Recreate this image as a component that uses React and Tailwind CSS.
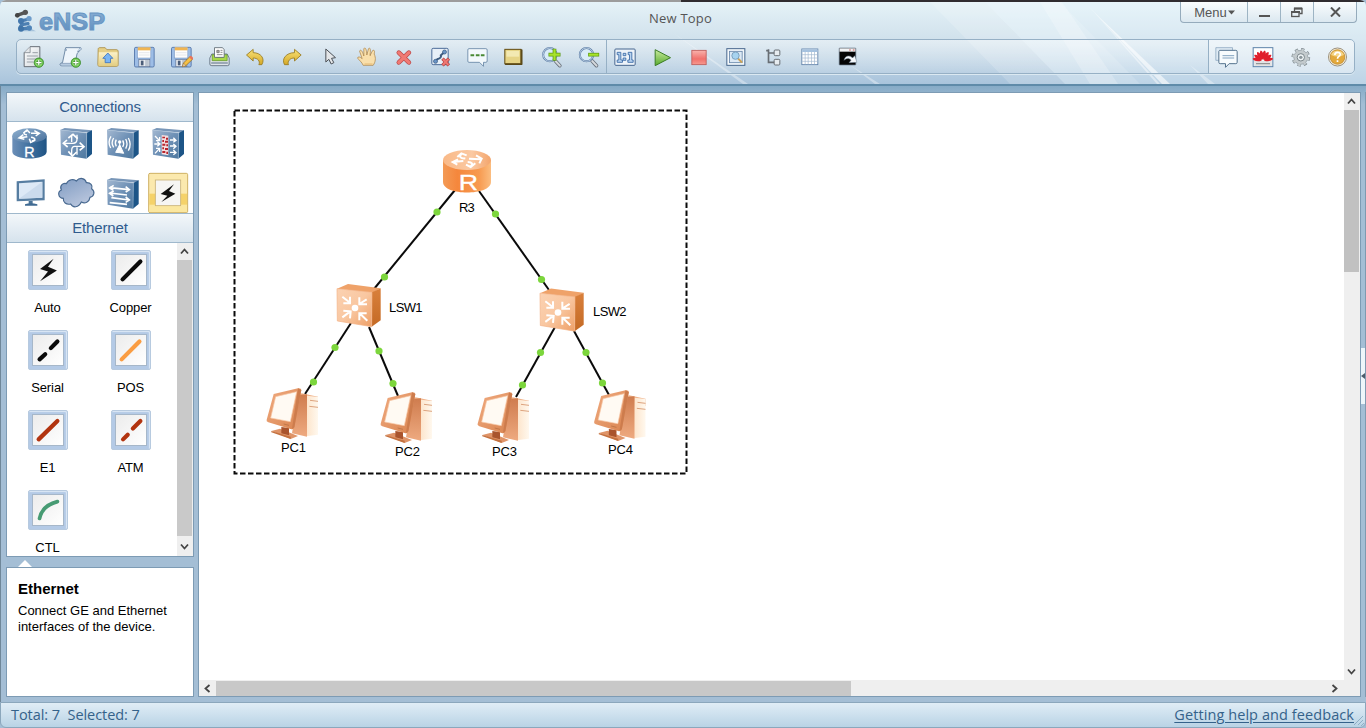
import React from "react";

function Defs() {
  return (
    <svg className="absolute h-0 w-0" aria-hidden="true">
      <defs>
        <linearGradient id="blueTop" x1="0" y1="0" x2="1" y2="1">
          <stop offset="0" stopColor="#8fb0cf" />
          <stop offset="1" stopColor="#476f9b" />
        </linearGradient>
        <linearGradient id="blueSide" x1="0" y1="0" x2="1" y2="0">
          <stop offset="0" stopColor="#6c8fb8" />
          <stop offset="0.5" stopColor="#41719f" />
          <stop offset="1" stopColor="#1f5484" />
        </linearGradient>
        <linearGradient id="blueFace" x1="0" y1="0" x2="1" y2="1">
          <stop offset="0" stopColor="#a3b8d1" />
          <stop offset="0.5" stopColor="#6f91b6" />
          <stop offset="1" stopColor="#4d789f" />
        </linearGradient>
        <linearGradient id="cloud" x1="0" y1="0" x2="0.6" y2="1">
          <stop offset="0" stopColor="#7f9bc2" />
          <stop offset="1" stopColor="#b9c6dd" />
        </linearGradient>
        <linearGradient id="orTop" x1="0" y1="0" x2="1" y2="0">
          <stop offset="0" stopColor="#f9b987" />
          <stop offset="0.6" stopColor="#fbc9a2" />
          <stop offset="1" stopColor="#f3a56c" />
        </linearGradient>
        <linearGradient id="orSide" x1="0" y1="0" x2="1" y2="0">
          <stop offset="0" stopColor="#f39a55" />
          <stop offset="0.3" stopColor="#f5873c" />
          <stop offset="0.75" stopColor="#f79a50" />
          <stop offset="1" stopColor="#fbbd80" />
        </linearGradient>
        <linearGradient id="swFace" x1="0" y1="0" x2="1" y2="1">
          <stop offset="0" stopColor="#fbd2b2" />
          <stop offset="0.5" stopColor="#f9c7a1" />
          <stop offset="1" stopColor="#ee9f66" />
        </linearGradient>
        <linearGradient id="swSide" x1="0" y1="0" x2="0" y2="1">
          <stop offset="0" stopColor="#d9803c" />
          <stop offset="1" stopColor="#c46a25" />
        </linearGradient>
        <linearGradient id="pcFrame" x1="0" y1="0" x2="1" y2="1">
          <stop offset="0" stopColor="#f0ab80" />
          <stop offset="1" stopColor="#d98450" />
        </linearGradient>
        <linearGradient id="pcSide" x1="0" y1="0" x2="0" y2="1">
          <stop offset="0" stopColor="#cf7c4e" />
          <stop offset="1" stopColor="#eeaa80" />
        </linearGradient>
        <linearGradient id="pcFront" x1="0" y1="0" x2="1" y2="0">
          <stop offset="0" stopColor="#fde3c8" />
          <stop offset="1" stopColor="#fff8ee" />
        </linearGradient>
        <linearGradient id="gold" x1="0" y1="0" x2="0" y2="1">
          <stop offset="0" stopColor="#f8e277" />
          <stop offset="1" stopColor="#d5a827" />
        </linearGradient>
        <linearGradient id="folder" x1="0" y1="0" x2="0" y2="1">
          <stop offset="0" stopColor="#fbf1c9" />
          <stop offset="1" stopColor="#e3cd80" />
        </linearGradient>
        <linearGradient id="play" x1="0" y1="0" x2="0" y2="1">
          <stop offset="0" stopColor="#c8ea9e" />
          <stop offset="1" stopColor="#58ab2e" />
        </linearGradient>
        <linearGradient id="stop" x1="0" y1="0" x2="0" y2="1">
          <stop offset="0" stopColor="#f9b3ad" />
          <stop offset="0.6" stopColor="#f0716c" />
          <stop offset="1" stopColor="#f79a90" />
        </linearGradient>
        <linearGradient id="paper" x1="0" y1="0" x2="1" y2="1">
          <stop offset="0" stopColor="#ffffff" />
          <stop offset="1" stopColor="#d3d8dd" />
        </linearGradient>
        <linearGradient id="logoText" x1="0" y1="0" x2="0" y2="1">
          <stop offset="0" stopColor="#8db2d6" />
          <stop offset="1" stopColor="#5b8cbd" />
        </linearGradient>
      </defs>
    </svg>
  );
}

function Plus({ x, y }) {
  return (
    <g>
      <circle cx={x} cy={y} r="14" fill="#5fbb45" stroke="#3a8a2b" strokeWidth="2.5" />
      <circle cx={x} cy={y} r="11" fill="#8bd76c" />
      <path d={`M${x - 8} ${y}h16M${x} ${y - 8}v16`} stroke="#2d7a22" strokeWidth="7" />
      <path d={`M${x - 8} ${y}h16M${x} ${y - 8}v16`} stroke="#fff" strokeWidth="4" />
    </g>
  );
}

function Floppy({ x }) {
  return (
    <g transform={`translate(${x} 0)`}>
      <rect x="2" y="142" width="59" height="59" rx="4" fill="#9dbde6" stroke="#4c6fa3" strokeWidth="2.5" />
      <rect x="11" y="142" width="40" height="32" fill="#fdfdfd" stroke="#6d8cb8" strokeWidth="1.5" />
      <rect x="12" y="142" width="38" height="9" fill="#f0b552" />
      <path d="M15 158h32M15 165h32" stroke="#dcdfe4" strokeWidth="2" />
      <rect x="15" y="178" width="33" height="22" fill="#e8ebef" stroke="#5a6f90" strokeWidth="2" />
      <rect x="21" y="182" width="8" height="14" fill="#4a5c78" />
      <rect x="34" y="180" width="11" height="18" fill="#bcc5d0" />
    </g>
  );
}

function Lens({ x, plus }) {
  return (
    <g transform={`translate(${x} 0)`}>
      <path d="M41 183L54 197" stroke="#68717c" strokeWidth="11" strokeLinecap="round" />
      <path d="M41 183L54 197" stroke="#d5d9dd" strokeWidth="6" strokeLinecap="round" />
      <circle cx="24" cy="164" r="20" fill="#d9ecf8" stroke="#5e7ea6" strokeWidth="6" />
      <circle cx="24" cy="164" r="20" fill="none" stroke="#c6d8ea" strokeWidth="2.5" />
      <path d={plus ? "M20 164h36M38 146v36" : "M29 164h33"} stroke="#5c9a12" strokeWidth="11" />
      <path d={plus ? "M22 164h32M38 148v32" : "M31 164h29"} stroke="#a8e32a" strokeWidth="6.5" />
    </g>
  );
}

const mainIcons = [
  <g>
    <path d="M89 140H118V200H71V158Z" fill="url(#paper)" stroke="#4f565e" strokeWidth="2.5" strokeLinejoin="round" />
    <path d="M89 140V158H71" fill="#e4e7ea" stroke="#6b737b" strokeWidth="2" />
    <path d="M96 158h16M79 168h33M79 177h28M79 186h20" stroke="#9aa1a8" strokeWidth="3" />
    <Plus x={115} y={188} />
  </g>,
  <g>
    <path d="M196 143H240C234 146 237 158 230 160L222 196H182C176 196 180 188 186 188L194 150Z" fill="#eef5fb" stroke="#5c7898" strokeWidth="2.5" strokeLinejoin="round" />
    <path d="M196 143C190 152 200 154 198 148M240 143C246 147 238 155 230 154" fill="#cfe0f0" stroke="#5c7898" strokeWidth="2" />
    <path d="M180 190H216V198H184C178 198 178 192 180 190Z" fill="#b7cbe0" stroke="#5c7898" strokeWidth="1.5" />
    <Plus x={226} y={188} />
  </g>,
  <g>
    <path d="M293 148C293 144 295 143 298 143H314L319 149H347C351 149 353 151 353 154V194C353 198 351 199 347 199H297C293 199 292 197 292 193Z" fill="#e6d087" stroke="#a98d44" strokeWidth="2.5" />
    <path d="M295 157H351V194C351 197 350 198 347 198H298C295 198 294 197 294 194Z" fill="url(#folder)" />
    <path d="M322 159L337 175H330V188H314V175H307Z" fill="#79b5f4" stroke="#3d73bd" strokeWidth="2.5" strokeLinejoin="round" />
  </g>,
  <Floppy x={400} />,
  <g>
    <Floppy x={511} />
    <path d="M549 189L569 169L577 177L556 197L546 200Z" fill="#f6c146" stroke="#8c6420" strokeWidth="2" />
    <path d="M566 172L570 167Q576 168 578 175L574 180Z" fill="#e9745a" />
    <path d="M549 189L556 197L546 200Z" fill="#f3dcc1" stroke="#8c6420" strokeWidth="1.5" />
  </g>,
  <g>
    <path d="M634 162H680L686 174V192Q686 197 681 197H634Q628 197 628 192V174Z" fill="#dfe4e9" stroke="#59697a" strokeWidth="2.5" />
    <path d="M632 189H682" stroke="#8494a5" strokeWidth="4" />
    <path d="M635 164H648V172H668V164H680V182H635Z" fill="#a9d84a" stroke="#558d20" strokeWidth="2" />
    <path d="M642 143H666L671 149V172H642Z" fill="#fff" stroke="#5d6770" strokeWidth="2.5" />
    <path d="M649 151h7v7h-7zM660 151h6M660 157h6M649 164h17" stroke="#777" strokeWidth="2.5" fill="#aaa" />
  </g>,
  <path d="M738 165L758 148V158C780 158 795 175 784 194H775C780 184 772 174 758 174V183Z" fill="url(#gold)" stroke="#96781f" strokeWidth="2.5" strokeLinejoin="round" />,
  <path d="M902 165L882 148V158C858 158 842 176 852 194H864C860 184 868 174 882 174V183Z" fill="url(#gold)" stroke="#96781f" strokeWidth="2.5" strokeLinejoin="round" />,
  <path transform="translate(930 0)" d="M46 147V186L55 178L62 192L70 188L63 175L75 173Z" fill="#e4e6e8" stroke="#4c5157" strokeWidth="3" strokeLinejoin="round" />,
  <g transform="translate(930 0)">
    <path d="M158 196C154 186 146 181 141 174C142 169 149 170 155 176L147 153C150 148 155 150 160 168L160 146C163 142 168 143 169 165L174 146C178 142 182 145 178 168L186 152C191 149 194 152 191 162C197 174 195 186 188 196Z" fill="#f9dfab" stroke="#a87b3d" strokeWidth="2" strokeLinejoin="round" />
    <path d="M158 168V176H178V166" fill="#f9dfab" />
    <path d="M162 192h24" stroke="#e5b872" strokeWidth="3" />
  </g>,
  <g transform="translate(930 0)">
    <path d="M265 158L295 187M295 158L265 187" stroke="#bb4a4a" strokeWidth="14" strokeLinecap="round" />
    <path d="M265 158L295 187M295 158L265 187" stroke="#f07973" strokeWidth="10" strokeLinecap="round" />
  </g>,
  <g transform="translate(930 0)">
    <rect x="364" y="145" width="49" height="49" rx="4" fill="#e8f0f8" stroke="#4b6b98" strokeWidth="3" />
    <path d="M374 184L380 178Q394 174 391 166L403 155" fill="none" stroke="#3e5c80" strokeWidth="6" />
    <circle cx="402" cy="156" r="6" fill="#6a94c5" stroke="#34547b" strokeWidth="2" />
    <circle cx="375" cy="184" r="6" fill="#6a94c5" stroke="#34547b" strokeWidth="2" />
    <path d="M396 176L415 196M415 176L396 196" stroke="#b53c3c" strokeWidth="10" />
    <path d="M397 177L414 195M414 177L397 195" stroke="#ee7772" strokeWidth="6" />
  </g>,
  <g transform="translate(930 0)">
    <path d="M475 146H526Q530 146 530 150V183Q530 187 526 187H519V199L507 187H475Q472 187 472 183V150Q472 146 475 146Z" fill="#f3f9fc" stroke="#6584a3" strokeWidth="2.5" />
    <path d="M480 166h11M496 166h11M511 166h11" stroke="#4a8a35" strokeWidth="6" />
  </g>,
  <g transform="translate(930 0)">
    <rect x="583" y="148" width="53" height="47" rx="2" fill="#574718" />
    <rect x="583" y="148" width="48" height="43" fill="#e6d486" stroke="#665118" strokeWidth="3" />
    <rect x="588" y="153" width="38" height="17" fill="#f3e9b2" />
  </g>,
  <g transform="translate(930 0)"><Lens x={694} plus /></g>,
  <g transform="translate(930 0)"><Lens x={804} /></g>,
  <g transform="translate(1860 0)">
    <rect x="-17" y="147" width="61" height="49" rx="3" fill="#edf3f9" stroke="#46668f" strokeWidth="3" />
    <path d="M-10 157H1V180H6V187H-10V180H-5V164H-10ZM23 157H34V180H38V187H22V180H27V164H23ZM8 160h8v7h-8zM8 174h8v7h-8z" fill="#b7d2ef" stroke="#3566a4" strokeWidth="2.5" />
  </g>,
  <g transform="translate(1860 0)">
    <path d="M104 149L150 173L104 197Z" fill="url(#play)" stroke="#3b7d26" strokeWidth="3" strokeLinejoin="round" />
  </g>,
  <g transform="translate(1860 0)">
    <rect x="214" y="151" width="43" height="43" fill="url(#stop)" stroke="#bd5957" strokeWidth="2.5" />
  </g>,
  <g transform="translate(1860 0)">
    <rect x="319" y="146" width="54" height="50" fill="#f5f9fc" stroke="#47668c" strokeWidth="3" />
    <rect x="327" y="154" width="38" height="34" fill="#dce9f5" stroke="#6584a8" strokeWidth="2.5" />
    <path d="M353 176L363 186" stroke="#cda356" strokeWidth="6" strokeLinecap="round" />
    <circle cx="345" cy="167" r="11" fill="#a7d3ef" stroke="#7da3c0" strokeWidth="3" />
  </g>,
  <g transform="translate(1860 0)" fill="none" stroke="#686e74">
    <path d="M444 148V187H461M444 159H461M437 152H444" strokeWidth="5" />
    <rect x="461" y="150" width="17" height="17" rx="3" fill="#e7ecf0" strokeWidth="3" />
    <rect x="461" y="178" width="17" height="17" rx="3" fill="#e7ecf0" strokeWidth="3" />
  </g>,
  <g transform="translate(1860 0)">
    <rect x="544" y="147" width="48" height="47" fill="#fff" stroke="#5a7da6" strokeWidth="2.5" />
    <rect x="545" y="148" width="46" height="8" fill="#a6c2df" />
    <path d="M545 164H591M545 174H591M545 184H591M554 156V193M563 156V193M573 156V193M582 156V193" stroke="#a0b6ce" strokeWidth="2" />
  </g>,
  <g transform="translate(1860 0)">
    <rect x="656" y="144" width="50" height="51" rx="2" fill="#050505" stroke="#6e8093" strokeWidth="2" />
    <rect x="657" y="145" width="48" height="10" fill="#f2f4f6" />
    <path d="M686 150h5M697 150h5" stroke="#c85757" strokeWidth="3" />
    <path d="M671 181C672 166 690 164 696 174L703 167L709 187L686 188L692 180C685 173 677 174 671 181Z" fill="#f5f8fb" stroke="#738499" strokeWidth="1.5" />
  </g>,
];

const rightIcons = [
  <g>
    <path d="M466 143H516V181H466Z" fill="#dfebf4" stroke="#7d9cb6" strokeWidth="2" />
    <path d="M477 151H526Q530 151 530 155V187Q530 191 526 191H506L495 202V191H479Q475 191 475 187V154Z" fill="#f7fbfd" stroke="#55738e" strokeWidth="3" strokeLinejoin="round" />
    <path d="M486 167h35M486 174h35" stroke="#6c91b3" strokeWidth="2.5" />
  </g>,
  <g>
    <rect x="578" y="143" width="59" height="57" fill="#fff" stroke="#5d83aa" strokeWidth="3" />
    <rect x="581" y="182" width="53" height="16" fill="#e2e3e5" />
    <path d="M587 191h42" stroke="#858585" strokeWidth="4" strokeDasharray="5 1" />
    <g fill="#e01f2c">
      {[-80, -56, -33, -11, 11, 33, 56, 80].map((a) => (
        <path key={a} transform={`rotate(${a} 607 182)`} d="M607 179C599 166 602 154 607 151C612 154 615 166 607 179Z" />
      ))}
    </g>
  </g>,
  <g>
    <circle cx="721" cy="172" r="22" fill="none" stroke="#7e898f" strokeWidth="12" strokeDasharray="9 8.3" />
    <circle cx="721" cy="172" r="21" fill="#c3cacd" stroke="#8b969b" strokeWidth="2" />
    <circle cx="721" cy="172" r="22" fill="none" stroke="#c3cacd" strokeWidth="8" strokeDasharray="7 10.3" strokeDashoffset="-1" />
    <circle cx="721" cy="172" r="11" fill="#edf2f4" stroke="#7b868b" strokeWidth="3" />
    <circle cx="721" cy="172" r="5" fill="#8a959b" />
  </g>,
  <g>
    <circle cx="831" cy="171" r="27" fill="#f7f3e5" stroke="#897c64" strokeWidth="2.5" />
    <circle cx="831" cy="171" r="22" fill="#e3a93c" stroke="#b77d20" strokeWidth="2" />
    <path d="M812 165C815 148 847 148 850 165Q831 174 812 165Z" fill="#f5d588" />
    <path d="M823 165C823 154 840 155 839 164C838 170 831 169 831 176M831 181v5" fill="none" stroke="#fff" strokeWidth="5" />
  </g>,
];

function Cube({ x, y, children }) {
  return (
    <g transform={`translate(${x} ${y})`}>
      <path d="M0 6L13 0L95 7L91 14Z" fill="#7896b8" />
      <path d="M79 15L95 7V78L78 92Z" fill="#1d5587" />
      <path d="M0 6L79 15L78 92L2 80Z" fill="url(#blueFace)" />
      <path d="M0 6L79 15L78 92" fill="none" stroke="#a5bdd5" strokeWidth="1.5" />
      {children}
    </g>
  );
}

function Router({ x, y }) {
  return (
    <g transform={`translate(${x} ${y})`}>
      <path d="M0 22V70C0 97 103 97 103 70V22Z" fill="url(#blueSide)" />
      <ellipse cx="51.500" cy="22" rx="51.500" ry="22" fill="url(#blueTop)" />
      <RouterArrows />
      <text x="51" y="85" textAnchor="middle" className="font-['Liberation_Sans']" fontSize="43" fill="#fff" stroke="#fff">R</text>
    </g>
  );
}

function RouterArrows() {
  return (
    <g stroke="#fff" strokeWidth="4.500" fill="none">
      <path d="M44 20C30 18 34 10 44 8M33 14L44 5L53 14M56 15L78 15M66 7L81 15L70 23" />
      <path d="M22 28L45 25M33 19L20 29L36 33M56 27C70 29 72 36 58 38M69 35L55 42L51 31" />
    </g>
  );
}

const deviceIcons = [
  <Router x={37} y={121} />,
  <Cube x={181} y={120}>
    <g stroke="#fff" strokeWidth="5" fill="none">
      <path d="M10 46H38Q50 46 50 34V20M68 55H43Q34 55 34 68V82M34 20V42M50 80V58" strokeWidth="4" />
      <path d="M20 36L9 46L22 57M58 44L71 56L58 67M24 30L38 19L52 32M24 70L36 84L49 72" />
    </g>
  </Cube>,
  <Cube x={321} y={120}>
    <g stroke="#fff" strokeWidth="4" fill="none">
      <path d="M28 35Q22 45 28 55M20 30Q11 44 20 58M12 25Q1 42 11 60M47 37Q53 47 47 57M56 33Q64 47 56 62M64 30Q75 49 64 68" />
      <circle cx="38" cy="42" r="5" fill="#fff" stroke="none" />
      <path d="M38 42V74L26 73L38 50L50 76L38 74" fill="#fff" strokeWidth="3" />
    </g>
  </Cube>,
  <Cube x={457} y={120}>
    <path d="M28 21L48 23V82L28 79Z" fill="#f5dfe0" />
    <path d="M30 26h8v5h-8zM41 29h6v6h-6zM30 36h5v6h-5zM38 38h9v6h-9zM30 47h9v6h-9zM42 49h5v6h-5zM30 58h5v6h-5zM38 60h9v6h-9zM30 69h9v6h-9zM42 71h5v7h-5z" fill="#b7242c" />
    <g stroke="#fff" strokeWidth="4" fill="none">
      <path d="M8 24L22 38M22 27V38H11M6 48H22M15 41L23 48L15 55M8 76L22 61M11 61H22V72" />
      <path d="M53 36H70M63 29L71 37L63 43M53 54H70M63 48L71 55L63 62M53 73H70M63 66L71 74L63 80" />
    </g>
  </Cube>,
  <g>
    <path d="M50 280L134 274V337L50 340Z" fill="#567da1" />
    <path d="M57 286L127 281V329L57 332Z" fill="#dde9f6" />
    <path d="M57 332L127 281V329Z" fill="#cbdbed" />
    <path d="M86 339h12v9h-12z" fill="#4b7397" />
    <path d="M75 349Q92 343 112 349V353H75Z" fill="#3f6a92" />
  </g>,
  <path d="M190 331C175 330 171 312 184 306C178 294 188 284 199 287C205 273 222 272 229 279C240 266 256 271 259 284C272 283 279 293 275 302C286 310 283 325 270 328C268 342 255 348 244 342C236 360 218 360 212 348C198 351 189 343 190 331Z" fill="url(#cloud)" stroke="#47688f" strokeWidth="3.500" />,
  <Cube x={321} y={270}>
    <g stroke="#fff" strokeWidth="5" fill="none">
      <path d="M8 29L66 35M20 22L8 30L19 37M56 26L67 35L56 42M8 45L60 51M20 39L8 46L19 54M13 59L66 66M56 57L67 66L56 73M8 74L60 79" />
    </g>
  </Cube>,
  <g>
    <rect x="446" y="256" width="117" height="118" rx="4" fill="#fbe9ae" stroke="#c5a34d" strokeWidth="2.500" />
    <rect x="448" y="317" width="113" height="38" fill="#f5d26a" />
    <rect x="448" y="350" width="113" height="22" fill="#fbe7a0" />
    <rect x="466" y="276" width="76" height="77" fill="#f6f5f3" stroke="#c9b278" strokeWidth="2.500" />
    <path d="M522 289L482 318L502 323L484 342L526 317L507 309Z" fill="#111" />
  </g>,
];

const cables = [
  ["Auto", <path d="M26 8L11.500 19L20 21.500L11.500 32L29.500 20.500L20 16.500Z" fill="#111" />],
  ["Copper", <path d="M11 30L30 11" stroke="#0b0b0b" strokeWidth="4.500" strokeLinecap="round" />],
  ["Serial", <path d="M11 30L17 24.500M23 18L30 11" stroke="#0b0b0b" strokeWidth="4.500" strokeLinecap="round" />],
  ["POS", <path d="M10 30L29 11" stroke="#fa9d43" strokeWidth="4.500" strokeLinecap="round" />],
  ["E1", <path d="M10 30L30 10.500" stroke="#b23410" strokeWidth="4.500" strokeLinecap="round" />],
  ["ATM", <path d="M11.500 30L16.500 25M22 18.500L30 10.500" stroke="#b23410" strokeWidth="4.500" strokeLinecap="round" />],
  ["CTL", <path d="M11 29Q14 15 30 11" fill="none" stroke="#479b73" strokeWidth="4" strokeLinecap="round" />],
];

function Chevron({ className, d }) {
  return (
    <svg className={className} width="9" height="9" viewBox="0 0 9 9" fill="none" stroke="#444" strokeWidth="1.800">
      <path d={d} />
    </svg>
  );
}

const UP = "M1 6.500L4.500 2.500L8 6.500";
const DOWN = "M1 2.500L4.500 6.500L8 2.500";

function PC({ dx, dy }) {
  return (
    <g transform={`translate(${230 + dx} ${340 + dy}) scale(0.33333)`}>
      <path d="M200 165L215 160L264 170V190L230 285Z" fill="#f0b48c" />
      <path d="M231 167L264 171V284L226 289Z" fill="url(#pcFront)" />
      <path d="M240 181L264 184M238 199L264 202" stroke="#dca37d" strokeWidth="3" />
      <path d="M204 165L231 163V290L186 280Z" fill="url(#pcSide)" />
      <path d="M124 273L150 266L204 288L182 297Z" fill="#df9468" />
      <path d="M154 261L177 264V286L154 280Z" fill="#a9542d" />
      <path d="M124 273L182 290V297L124 277Z" fill="#c4713f" />
      <path d="M131 162L204 145Q214 144 214 150L193 262Q191 269 184 268L115 247Q108 244 110 239Z" fill="url(#pcFrame)" />
      <path d="M204 145L214 150L193 262L186 267Z" fill="#cd7c4d" />
      <path d="M137 170L200 155L181 245L122 234Z" fill="#fffaf3" stroke="#f7c9a7" strokeWidth="2" />
      <path d="M161 252l16 4" stroke="#b06a3e" strokeWidth="2" />
    </g>
  );
}

function Switch({ dx, dy }) {
  return (
    <g transform={`translate(${320 + dx} ${100 + dy}) scale(0.33333)`}>
      <path d="M51 566L84 552L182 565L157 578Z" fill="#efa269" />
      <path d="M156 577L182 565V661L155 680Z" fill="url(#swSide)" />
      <path d="M51 566L156 577L155 680L52 663Z" fill="url(#swFace)" stroke="#f3b287" strokeWidth="2" />
      <circle cx="105" cy="624" r="10" fill="#fff" />
      <g stroke="#fff" strokeWidth="6" fill="none">
        <path d="M67 590L92 610M90 590V610H70M140 598L118 612M118 592V613H141M67 652L91 634M70 632L92 634L90 655M142 662L118 639M140 640H118V661" />
      </g>
    </g>
  );
}

const links = [
  [455, 190, 374, 289],
  [479, 191, 549, 290],
  [351, 323, 305, 394],
  [369, 327, 398, 396],
  [555, 327, 516, 397],
  [574, 331, 609, 395],
];

const ports = [
  [437, 212], [384.5, 277], [495.5, 214], [541.5, 279.500], [335, 347.500], [313.500, 382],
  [379, 351], [393, 383.500], [540.500, 352.500], [522.500, 385], [586, 352.500], [602.500, 383],
];

function Topology() {
  return (
    <svg className="absolute inset-0" width="1145" height="587" viewBox="199 93 1145 587">
      <rect x="234.500" y="110.500" width="452" height="363" fill="none" stroke="#0a0a0a" strokeWidth="2" strokeDasharray="5.500 2.500" />
      {links.map(([x1, y1, x2, y2]) => (
        <line key={x1} x1={x1} y1={y1} x2={x2} y2={y2} stroke="#0a0a0a" strokeWidth="2" />
      ))}
      {ports.map(([x, y]) => (
        <circle key={x} cx={x} cy={y} r="3.600" fill="#7cd63c" />
      ))}
      <g transform="translate(320 100) scale(0.33333)">
        <path d="M369 180V246C369 288 513 288 513 246V180Z" fill="url(#orSide)" />
        <ellipse cx="441" cy="180" rx="72" ry="30" fill="url(#orTop)" />
        <g stroke="#fff" strokeWidth="6" fill="none">
          <path d="M436 175C422 176 416 171 424 162M412 171L424 160L440 166M447 176L482 178M468 166L485 176L478 190" />
          <path d="M398 186L430 183M414 178L398 186L412 194M443 186C456 187 461 191 452 199M466 190L452 201L438 194" />
        </g>
        <text x="416" y="269" textLength="58" lengthAdjust="spacingAndGlyphs" className="font-['Liberation_Sans']" fontSize="66" fill="#fff" stroke="#fff">R</text>
      </g>
      <Switch dx={0} dy={0} />
      <Switch dx={203} dy={4.5} />
      <PC dx={0} dy={0} />
      <PC dx={114} dy={4} />
      <PC dx={211} dy={4} />
      <PC dx={327.500} dy={2} />
    </svg>
  );
}

function Header() {
  return (
    <header className="relative h-[86px] shrink-0 overflow-hidden rounded-t-md border-b-2 border-[#5f8ba9] bg-linear-to-b from-[#e6f3f8] via-[#cfe0eb] via-50% to-[#a9c4dc]">
      <svg className="absolute inset-0" width="1366" height="84" viewBox="0 0 1366 84" fill="#fff">
        <path d="M930 2H1060L1140 84H1010Z" opacity="0.16" />
        <path d="M985 2H1366V84H1065Z" fill="#eafaff" opacity="0.3" />
        <path d="M1040 2H1062L1118 84H1090Z" opacity="0.22" />
        <path d="M1094 12L1170 84H1162Z" opacity="0.6" />
        <path d="M1085 2L1160 84H1157Z" opacity="0.45" />
        <path d="M672 32L748 84H743Z" opacity="0.35" />
        <path d="M850 65L880 84H875ZM1190 65L1215 84H1208Z" opacity="0.35" />
      </svg>
      <div className="absolute inset-x-0 top-0 flex h-[2px]">
        <div className="w-[681px] bg-[#9c9c9c]" />
        <div className="flex-1 bg-[#302c30]" />
      </div>
      <div className="relative flex h-[39px] items-start">
        <div className="flex w-[300px] items-center pt-[8px] pl-[14px]">
          <svg width="24" height="26" viewBox="42 24 72 78" fill="none">
            <path d="M60 94H108L96 88" fill="#a5c2db" />
            <path d="M51 46L76 37" stroke="#555" strokeWidth="10" strokeLinecap="round" />
            <circle cx="52" cy="46" r="7" fill="#444" />
            <circle cx="76" cy="37" r="8" fill="#555" />
            <path d="M88 57L64 63Q60 72 70 73L84 71M66 75Q56 82 64 87L88 84" stroke="#4c7fb2" strokeWidth="10" strokeLinecap="round" />
            <circle cx="87" cy="56" r="8" fill="#6d9cca" />
            <circle cx="63" cy="63" r="9" fill="#4478ad" />
            <circle cx="63" cy="86" r="9" fill="#3f74a8" />
            <circle cx="88" cy="84" r="8" fill="#4f84b8" />
          </svg>
          <svg width="72" height="26" viewBox="0 0 72 26">
            <text x="1" y="21.500" textLength="66" lengthAdjust="spacingAndGlyphs" className="font-['Liberation_Sans'] text-[23px] font-bold" fill="url(#logoText)" stroke="#6795c3" strokeWidth="0.9">eNSP</text>
          </svg>
        </div>
        <h1 className="flex-1 pt-[9px] pr-[5px] text-center font-['Open_Sans',sans-serif] text-[13px] leading-[19px] text-[#555] tracking-[0.2px]">New Topo</h1>
        <div className="mt-[2px] mr-[9px] ml-[114px] flex h-[21px] w-[177px] divide-x divide-[#9db4c4] rounded-b border border-t-0 border-[#95abbc] bg-linear-to-b from-white/80 to-[#dbe8f0] text-[#555]">
          <div className="flex w-[67px] items-center justify-center gap-px pl-px font-['Liberation_Sans'] text-[13px] leading-[19px]">
            Menu
            <svg width="7" height="5"><path d="M0 0.500H7L3.500 4.500Z" fill="#555" /></svg>
          </div>
          <div className="flex w-[33px] items-center justify-center">
            <svg width="11" height="12"><path d="M0 10H11" stroke="#555" strokeWidth="2" /></svg>
          </div>
          <div className="flex w-[33px] items-center justify-center">
            <svg width="12" height="11" viewBox="0 0 12 11" fill="none" stroke="#555">
              <path d="M3.500 4V1.500H11V6.500H8.500" strokeWidth="1.300" /><path d="M3 1.500h8" strokeWidth="1.800" />
              <rect x="0.700" y="4.800" width="7.300" height="4.700" strokeWidth="1.300" /><path d="M0 5h9" strokeWidth="1.800" />
            </svg>
          </div>
          <div className="flex flex-1 items-center justify-center">
            <svg width="11" height="10" viewBox="0 0 11 10" stroke="#555" strokeWidth="2"><path d="M1 0.500L10 9.500M10 0.500L1 9.500" /></svg>
          </div>
        </div>
      </div>
      <div className="relative mr-[11px] ml-4 flex h-[35px] items-center justify-between rounded-[5px] border border-[#96b0c5] bg-linear-to-b from-white/40 to-white/10 shadow-[0_1px_0_#dbe9f2]">
        <div className="flex items-center gap-[6px]">
          {mainIcons.map((icon, i) => (
            <React.Fragment key={i}>
              {i === 16 && <div className="-mr-[4px] -ml-[3px] h-[33px] w-px bg-[#96b0c5]" />}
              <div className="flex w-[31px] justify-center">
                <svg width="24" height="24" className="shrink-0" viewBox={`${61.5 + 111 * i} 135 72 72`}>{icon}</svg>
              </div>
            </React.Fragment>
          ))}
        </div>
        <div className="flex h-full items-center gap-[6px] rounded-r border-l border-[#96b0c5] bg-white/30 pr-px pl-[2px]">
          {rightIcons.map((icon, i) => (
            <div key={i} className="flex w-[31px] justify-center">
              <svg width="24" height="24" className="shrink-0" viewBox={`${463.5 + 111 * i} 135 72 72`}>{icon}</svg>
            </div>
          ))}
        </div>
      </div>
    </header>
  );
}

function PanelTitle({ children }) {
  return (
    <h2 className="flex h-[29px] shrink-0 items-center justify-center border-b border-[#9fb8cc] bg-linear-to-b from-[#f3f7fa] to-[#d6e3ed] font-['Liberation_Sans'] text-[15px] tracking-[-0.15px] text-[#2f5b8d]">
      {children}
    </h2>
  );
}

function Sidebar() {
  return (
    <aside className="flex w-[188px] shrink-0 flex-col">
      <section className="flex h-[465px] flex-col border border-[#7d9bb4] bg-white">
        <PanelTitle>Connections</PanelTitle>
        <div className="-mt-px grid h-[93px] shrink-0 grid-cols-[repeat(4,46px)] border-b border-[#9fb8cc]">
          {deviceIcons.map((icon, i) => (
            <svg key={i} width="46" height="46" viewBox={`${21 + 138 * (i % 4)} ${99 + 138 * Math.floor(i / 4)} 138 138`}>{icon}</svg>
          ))}
        </div>
        <PanelTitle>Ethernet</PanelTitle>
        <div className="flex min-h-0 flex-1">
          <div className="-ml-px grid flex-1 auto-rows-[80px] grid-cols-[83px_83px] content-start overflow-hidden pt-[7px]">
            {cables.map(([name, art]) => (
              <div key={name} className="flex flex-col items-center">
                <div className="size-[40px] rounded-[2px] border border-[#b7cadf] bg-[#b4cae6] p-[3px] shadow-[inset_-1px_1px_1px_#dce8f5]">
                  <svg width="32" height="32" viewBox="4 4 32 32" className="border border-[#a6b7c9] bg-linear-to-br from-[#ececec] to-white">{art}</svg>
                </div>
                <span className="mt-[10px] font-['Liberation_Sans'] text-[13px] leading-[16px] tracking-[-0.1px] text-black">{name}</span>
              </div>
            ))}
          </div>
          <div className="flex w-[16px] flex-col justify-between bg-[#efefef]">
            <div className="flex h-[17px] items-center pl-[3px]"><Chevron d={UP} /></div>
            <div className="w-[15px] flex-1 bg-[#c9c9c9]" />
            <div className="flex h-[20px] items-center pl-[3px]"><Chevron d={DOWN} /></div>
          </div>
        </div>
      </section>
      <div className="flex h-[10px] items-end pl-[12px]">
        <svg width="14" height="7"><path d="M0 7L7 0L14 7Z" fill="#fff" /></svg>
      </div>
      <section className="flex-1 border border-[#7d9bb4] bg-white px-[11px] pt-[12px] font-['Liberation_Sans'] text-black">
        <h3 className="text-[15px] leading-[17px] font-bold">Ethernet</h3>
        <p className="mt-[6px] text-[13px] leading-[16px] whitespace-nowrap">Connect GE and Ethernet<br />interfaces of the device.</p>
      </section>
    </aside>
  );
}

function Canvas() {
  return (
    <main className="flex min-w-0 flex-1 flex-col border border-[#7d9bb4] bg-white">
      <div className="flex h-[587px]">
        <div className="relative flex-1 overflow-hidden font-['Liberation_Sans'] text-[13px] leading-[16px] text-black">
          <Topology />
          <span className="absolute top-[107px] left-[260px] tracking-[-0.8px]">R3</span>
          <span className="absolute top-[207px] left-[190px] tracking-[-0.6px]">LSW1</span>
          <span className="absolute top-[211px] left-[394px] tracking-[-0.6px]">LSW2</span>
          <span className="absolute top-[347px] left-[82px] tracking-[-0.2px]">PC1</span>
          <span className="absolute top-[351px] left-[196px] tracking-[-0.2px]">PC2</span>
          <span className="absolute top-[351px] left-[293px] tracking-[-0.2px]">PC3</span>
          <span className="absolute top-[349px] left-[409px] tracking-[-0.2px]">PC4</span>
        </div>
        <div className="flex w-[16px] flex-col bg-[#efefef]">
          <div className="flex h-[17px] items-center pl-[3px]"><Chevron d={UP} /></div>
          <div className="h-[162px] w-[15px] bg-[#c1c1c1]" />
          <div className="mt-auto flex h-[17px] items-center pl-[3px]"><Chevron d={DOWN} /></div>
        </div>
      </div>
      <div className="flex flex-1 items-center bg-[#efefef] pr-[16px]">
        <div className="flex w-[17px] justify-center"><Chevron d="M6.500 1L2.500 4.500L6.500 8" /></div>
        <div className="h-[15px] w-[635px] bg-[#c8c8c8]" />
        <div className="ml-auto flex w-[20px] justify-center"><Chevron d="M2.500 1L6.500 4.500L2.500 8" /></div>
      </div>
    </main>
  );
}

export default function App() {
  return (
    <div className="flex h-[728px] w-[1366px] flex-col overflow-hidden bg-[#a4bed5]">
      <Defs />
      <Header />
      <div className="flex h-[616px] shrink-0 border-l border-[#6f8799] bg-linear-to-b from-[#86abc7] to-[#a4bed5] to-3% pt-[6px] pr-0 pb-[5px] pl-[5px]">
        <Sidebar />
        <div className="w-[4px]" />
        <Canvas />
        <div className="flex w-[5px] items-center border-r border-[#7f9ab0]">
          <div className="mt-[-38px] flex h-[56px] w-[4px] items-center bg-[#edf6fa]">
            <svg width="4" height="6"><path d="M4 0L0 3L4 6Z" fill="#4c5d6c" /></svg>
          </div>
        </div>
      </div>
      <footer className="relative flex flex-1 items-center justify-between rounded-b-md border border-[#8ba7bc] bg-linear-to-b from-[#e0edf6] to-[#b9d3e5] pr-[11px] pl-[10px] font-['Open_Sans',sans-serif] text-[14.500px] text-[#35628a]">
        <span className="tracking-[-0.05px] whitespace-pre">Total: 7  Selected: 7</span>
        <a className="tracking-[0.08px] underline underline-offset-2">Getting help and feedback</a>
        <svg className="absolute right-0 bottom-0" width="14" height="14" stroke="#8fafc6"><path d="M3 12L12 3M7 12L12 7M10 13L13 10" /></svg>
      </footer>
    </div>
  );
}
